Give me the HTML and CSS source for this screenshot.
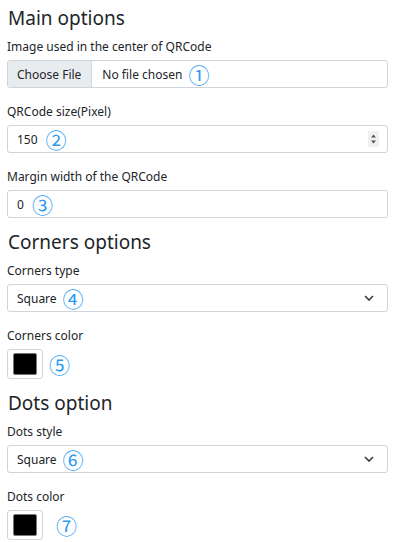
FILE: index.html
```html
<!DOCTYPE html>
<html>
  <head>
    <title>QRCode options</title>
    <link rel="stylesheet" href="styles.css">
  </head>
  <body>
    <div class="section">
      <h2 class="heading">Main options</h2>
      <div class="group">
        <div class="label">Image used in the center of QRCode</div>
        <div class="field file-field">
          <span class="file-button">Choose File</span>
          <span class="value">No file chosen</span>
          <span class="mark">①</span>
        </div>
      </div>
      <div class="group">
        <div class="label">QRCode size(Pixel)</div>
        <div class="field">
          <span class="value">150</span>
          <span class="mark mark-wide">②</span>
          <span class="spinner">
            <svg width="11" height="16" viewBox="0 0 11 16">
              <path d="M3 6.5 L5.5 3.5 L8 6.5 Z" fill="#555"/>
              <path d="M3 9.5 L5.5 12.5 L8 9.5 Z" fill="#555"/>
            </svg>
          </span>
        </div>
      </div>
      <div class="group">
        <div class="label">Margin width of the QRCode</div>
        <div class="field">
          <span class="value">0</span>
          <span class="mark mark-wide">③</span>
        </div>
      </div>
    </div>

    <div class="section">
      <h2 class="heading">Corners options</h2>
      <div class="group">
        <div class="label">Corners type</div>
        <div class="field">
          <span class="value">Square</span>
          <span class="mark">④</span>
          <svg class="chevron" width="10" height="6" viewBox="0 0 10 6">
            <path d="M1 1 L5 5 L9 1" fill="none" stroke="#343a40" stroke-width="1.6"/>
          </svg>
        </div>
      </div>
      <div class="group">
        <div class="label">Corners color</div>
        <div class="color-row">
          <span class="swatch"><span class="swatch-fill"></span></span>
          <span class="mark">⑤</span>
        </div>
      </div>
    </div>

    <div class="section">
      <h2 class="heading">Dots option</h2>
      <div class="group">
        <div class="label">Dots style</div>
        <div class="field">
          <span class="value">Square</span>
          <span class="mark">⑥</span>
          <svg class="chevron" width="10" height="6" viewBox="0 0 10 6">
            <path d="M1 1 L5 5 L9 1" fill="none" stroke="#343a40" stroke-width="1.6"/>
          </svg>
        </div>
      </div>
      <div class="group">
        <div class="label">Dots color</div>
        <div class="color-row">
          <span class="swatch"><span class="swatch-fill"></span></span>
          <span class="mark mark-far">⑦</span>
        </div>
      </div>
    </div>
  </body>
</html>
```

FILE: styles.css
```css
body {
  font-family: "Noto Sans", "Open Sans", sans-serif;
  margin: 0;
  padding: 0 18px 0 7px;
  background-color: #fff;
  color: #212529;
}
.section + .section {
  padding-top: 6px;
}
.heading {
  font-size: 19px;
  font-weight: 400;
  line-height: 28px;
  margin: 4px 0 7px 1px;
}
.group + .group {
  margin-top: 16px;
}
.label {
  font-size: 12px;
  line-height: 16px;
  margin-bottom: 5px;
}
.field {
  display: flex;
  align-items: center;
  height: 28px;
  box-sizing: border-box;
  border: 1px solid #ced4da;
  border-radius: 3px;
  padding: 0 10px 0 9px;
  font-size: 12px;
}
.file-field {
  padding-left: 0;
}
.file-button {
  display: flex;
  align-items: center;
  height: 100%;
  padding: 0 10px 0 9px;
  background-color: #e9ecef;
  border-right: 1px solid #ced4da;
  border-radius: 3px 0 0 3px;
  margin-right: 10px;
}
.mark {
  font-family: "Noto Sans CJK SC", sans-serif;
  font-size: 21px;
  line-height: 20px;
  color: #2b9af3;
  margin-left: 6px;
}
.mark-wide {
  margin-left: 8px;
}
.mark-far {
  margin-left: 13px;
}
.spinner {
  margin-left: auto;
  margin-right: -2px;
  display: flex;
  background-color: #f0f0f0;
}
.chevron {
  margin-left: auto;
  margin-right: 3px;
}
.color-row {
  display: flex;
  align-items: center;
}
.swatch {
  display: flex;
  align-items: center;
  justify-content: center;
  width: 36px;
  height: 30px;
  box-sizing: border-box;
  border: 1px solid #ced4da;
  border-radius: 3px;
}
.swatch-fill {
  width: 24px;
  height: 22px;
  background-color: #000;
  border: 1px solid #777;
  border-radius: 2px;
  box-sizing: border-box;
}
```
